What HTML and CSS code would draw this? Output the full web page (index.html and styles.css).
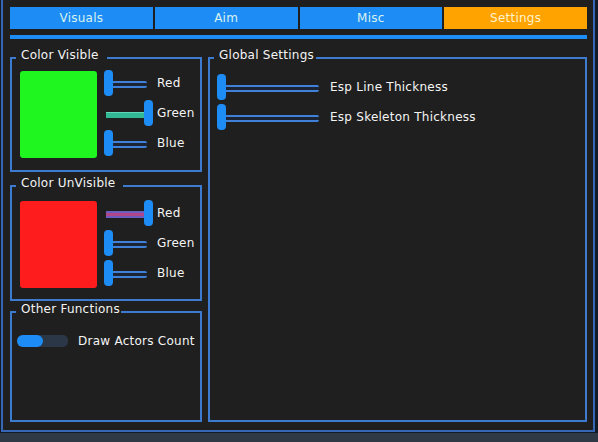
FILE: index.html
```html
<!DOCTYPE html>
<html>
<head>
<meta charset="utf-8">
<link rel="stylesheet" href="styles.css">
</head>
<body>
<div class="frame">
  <div class="window">
    <nav class="tabs">
      <div class="tab">Visuals</div>
      <div class="tab">Aim</div>
      <div class="tab">Misc</div>
      <div class="tab active">Settings</div>
    </nav>
    <div class="tabbar"></div>
    <div class="content">
      <div class="col-left">
        <fieldset class="group g-visible">
          <legend>Color Visible</legend>
          <div class="color-row">
            <div class="swatch green"></div>
            <div class="sliders">
              <div class="srow"><div class="slider small"><div class="track"></div><div class="handle"></div></div><span class="label">Red</span></div>
              <div class="srow"><div class="slider small max"><div class="track fill-teal"></div><div class="handle"></div></div><span class="label">Green</span></div>
              <div class="srow"><div class="slider small"><div class="track"></div><div class="handle"></div></div><span class="label">Blue</span></div>
            </div>
          </div>
        </fieldset>
        <fieldset class="group g-invisible">
          <legend>Color UnVisible</legend>
          <div class="color-row">
            <div class="swatch red"></div>
            <div class="sliders">
              <div class="srow"><div class="slider small max"><div class="track fill-pink"></div><div class="handle"></div></div><span class="label">Red</span></div>
              <div class="srow"><div class="slider small"><div class="track"></div><div class="handle"></div></div><span class="label">Green</span></div>
              <div class="srow"><div class="slider small"><div class="track"></div><div class="handle"></div></div><span class="label">Blue</span></div>
            </div>
          </div>
        </fieldset>
        <fieldset class="group g-other">
          <legend>Other Functions</legend>
          <div class="toggle-row">
            <div class="toggle"><div class="knob"></div></div>
            <span class="label">Draw Actors Count</span>
          </div>
        </fieldset>
      </div>
      <fieldset class="group g-global">
        <legend>Global Settings</legend>
        <div class="sliders">
          <div class="srow wide"><div class="slider long"><div class="track"></div><div class="handle"></div></div><span class="label">Esp Line Thickness</span></div>
          <div class="srow wide"><div class="slider long"><div class="track"></div><div class="handle"></div></div><span class="label">Esp Skeleton Thickness</span></div>
        </div>
      </fieldset>
    </div>
  </div>
</div>
</body>
</html>
```

FILE: styles.css
```css
html, body {
  margin: 0;
  padding: 0;
}
body {
  width: 598px;
  height: 442px;
  background: #2e3945;
  font-family: "DejaVu Sans", "Liberation Sans", sans-serif;
  font-size: 12px;
  letter-spacing: 0.25px;
  color: #f2f2f2;
  overflow: hidden;
}
.frame {
  height: 433px;
  background: #121a28;
  padding-left: 1px;
  box-sizing: border-box;
}
.window {
  width: 594px;
  height: 432px;
  box-sizing: border-box;
  background: #1f1f1f;
  border-left: 2px solid #3766b4;
  border-right: 2px solid #3766b4;
  border-bottom: 2px solid #3766b4;
  padding: 7px 6px 8px 7px;
  display: flex;
  flex-direction: column;
}
.tabs {
  display: grid;
  grid-template-columns: repeat(4, 1fr);
  column-gap: 2px;
  height: 22px;
}
.tab {
  background: #1e8cf5;
  color: #d8f3ee;
  display: flex;
  align-items: center;
  justify-content: center;
  line-height: 14px;
}
.tab.active {
  background: #ffa300;
  color: #fff2cf;
}
.tabbar {
  height: 4px;
  margin-top: 6px;
  background: #1e8cf5;
}
.content {
  flex: 1;
  margin-top: 9px;
  display: flex;
  gap: 6px;
  min-height: 0;
}
.col-left {
  width: 192px;
  display: flex;
  flex-direction: column;
}
.group {
  margin: 0;
  border: 2px solid #3d7bd0;
  padding: 2px 0 12px 8px;
  min-inline-size: 0;
}
.group legend {
  padding: 0 8px 6px 5px;
  margin-left: -4px;
  line-height: 14px;
  color: #f4f4f4;
}
.g-invisible {
  margin-top: 4px;
  padding-top: 4px;
  padding-bottom: 11px;
}
.g-other {
  margin-top: 1px;
  flex: 1;
  padding: 12px 0 0 5px;
}
.g-other legend {
  margin-left: -1px;
  padding-right: 1px;
}
.g-global {
  flex: 1;
  padding: 6px 0 0 7px;
}
.g-global legend {
  margin-left: -3px;
  padding-right: 2px;
}
.color-row {
  display: flex;
  align-items: flex-start;
}
.swatch {
  width: 77px;
  height: 87px;
  margin-top: 1px;
  border-radius: 3px;
}
.swatch.green { background: #1ff51f; }
.swatch.red { background: #ff1c1c; }
.g-visible .sliders, .g-invisible .sliders {
  margin-left: 7px;
}
.sliders {
  display: flex;
  flex-direction: column;
  gap: 4px;
}
.srow {
  display: flex;
  align-items: center;
  gap: 4px;
  height: 26px;
}
.srow.wide { gap: 5px; }
.slider {
  position: relative;
  height: 26px;
  flex: none;
}
.slider.small { width: 49px; }
.slider.long { width: 108px; }
.track {
  position: absolute;
  left: 2px;
  right: 6px;
  top: 11px;
  height: 7px;
  box-sizing: border-box;
  border-top: 2px solid #3f80d8;
  border-bottom: 2px solid #3f80d8;
  background: #1c2434;
  border-radius: 0 2px 2px 0;
}
.track.fill-teal {
  top: 12px;
  height: 6px;
  border: none;
  border-top: 1px solid #5fd8b8;
  background: #33b896;
}
.track.fill-pink {
  top: 11px;
  height: 7px;
  border-top: 2px solid #6b5cc0;
  border-bottom: 2px solid #6b5cc0;
  background: #b2468a;
}
.handle {
  position: absolute;
  top: 0;
  left: 0;
  width: 9px;
  height: 26px;
  border-radius: 4px;
  background: #1e8cf5;
}
.slider.max .handle {
  left: auto;
  right: 0;
}
.label {
  line-height: 14px;
  white-space: nowrap;
  color: #f4f4f4;
}
.toggle-row {
  display: flex;
  align-items: center;
  gap: 10px;
}
.toggle {
  width: 51px;
  height: 12px;
  border-radius: 5px;
  background: #2b3646;
  flex: none;
}
.knob {
  width: 26px;
  height: 12px;
  border-radius: 6px;
  background: #1e8cf5;
}
```
